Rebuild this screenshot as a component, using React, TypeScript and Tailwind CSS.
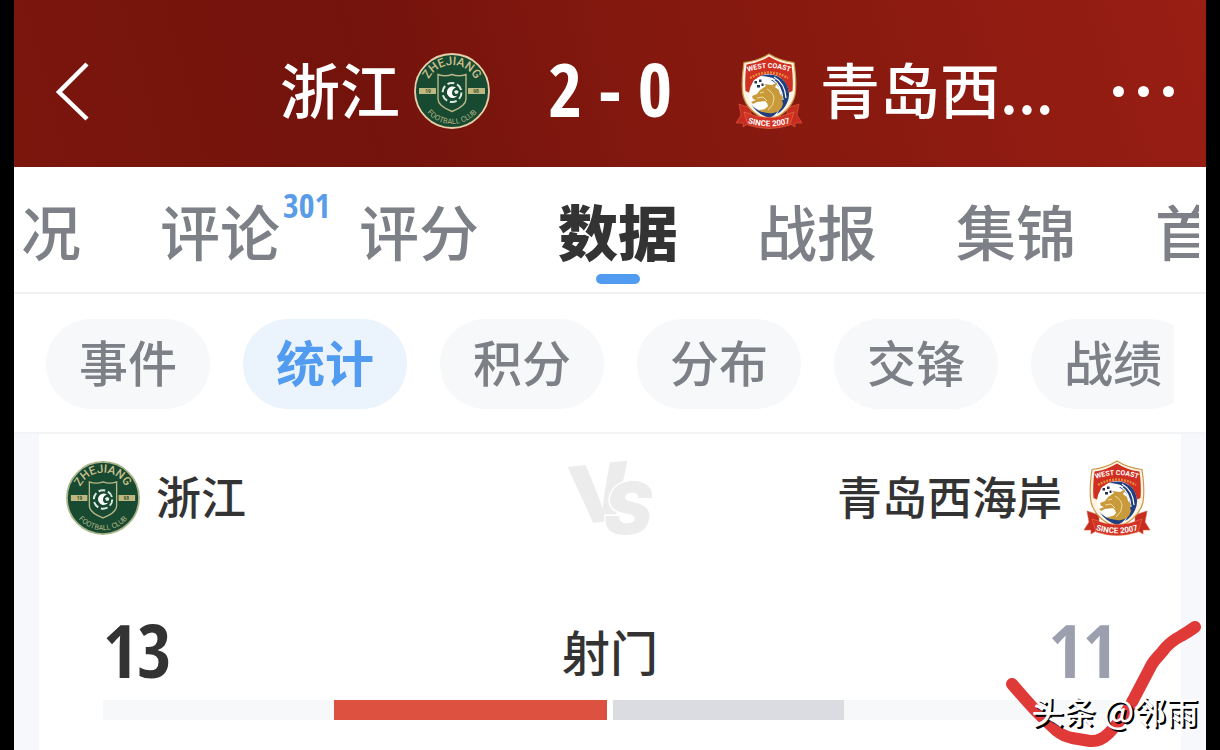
import React, { useState } from "react";

const tabs = ["况", "评论", "评分", "数据", "战报", "集锦", "首"];
const filters = ["事件", "统计", "积分", "分布", "交锋", "战绩"];
const stats = [{ label: "射门", home: 13, away: 11 }];

const ZhejiangLogo: React.FC<{ className: string; id: string; ring: string }> = ({ className, id, ring }) => (
  <svg viewBox="0 0 76 76" className={className} role="img" aria-label="浙江">
    <defs>
      <path id={`${id}-top`} d="M12 38 A26 26 0 0 1 64 38" />
      <path id={`${id}-bottom`} d="M5 38 A33 33 0 0 0 71 38" />
    </defs>
    <circle cx="38" cy="38" r="37" fill="#174a30" stroke={ring} strokeWidth="1.8" />
    <text fill="#c9bf8c" fontSize="12" fontWeight="500" fontFamily="Roboto, sans-serif" textAnchor="middle">
      <textPath href={`#${id}-top`} startOffset="50%">ZHEJIANG</textPath>
    </text>
    <text fill="#b4b486" fontSize="7.5" fontFamily="Roboto, sans-serif" textAnchor="middle">
      <textPath href={`#${id}-bottom`} startOffset="50%">FOOTBALL CLUB</textPath>
    </text>
    <path d="M5 35h17v6H5z M54 35h17v6H54z" fill="#bdb880" />
    <text x="14" y="40" fill="#3d512c" fontSize="5" fontWeight="700" fontFamily="Roboto, sans-serif" textAnchor="middle">19</text>
    <text x="62" y="40" fill="#3d512c" fontSize="5" fontWeight="700" fontFamily="Roboto, sans-serif" textAnchor="middle">98</text>
    <path d="M24 21.5q7 2.5 14 0 7 2.5 14 0V46q0 7-14 12.500Q24 53 24 46z" fill="#174a30" stroke="#b9b788" strokeWidth="1.400" />
    <circle cx="38" cy="39.500" r="9.500" fill="none" stroke="#dcebe2" strokeWidth="2" strokeDasharray="7 2.950" />
    <path d="M42 34.500a5.800 5.800 0 1 0 1.500 8c-3 1.500-5.500.5-5.500-2.800 0-2.600 1.800-4.400 4-5.200z" fill="#fff" />
    <path d="M40 38.500l2-1.500 2.500 1-.5 2.500-2.500.5z" fill="#e4f0e9" />
  </svg>
);

const QingdaoLogo: React.FC<{ className: string; id: string }> = ({ className, id }) => (
  <svg viewBox="0 0 76 76" className={className} role="img" aria-label="青岛西海岸">
    <defs>
      <path id={`${id}-top`} d="M15 20 Q39 10 63 20" />
      <path id={`${id}-bottom`} d="M16 69.500 Q39 77 62 69.500" />
    </defs>
    <path d="M9 51l12 4v14l-8 5v-4H6l5-8zM69 51l-12 4v14l8 5v-4h7l-5-8z" fill="#c72c20" stroke="#e0603c" strokeWidth="0.600" />
    <path d="M39 1Q28 8 14 9.500Q11 30 13 42Q17 59 39 68Q61 59 65 42Q67 30 64 9.500Q50 8 39 1z" fill="#fff3df" stroke="#c9994a" strokeWidth="1.200" />
    <path d="M39 3.500Q29 10 16.500 11.500Q14.500 26 15.500 38L20 40Q20 24 39 22Q58 24 58 40L62.500 38Q63.500 26 61.500 11.500Q49 10 39 3.500z" fill="#cf3022" />
    <text fill="#fff" fontSize="7" fontWeight="700" fontFamily="Roboto, sans-serif" textAnchor="middle">
      <textPath href={`#${id}-top`} startOffset="50%">WEST COAST</textPath>
    </text>
    <path d="M20 25Q39 14 58 25" fill="none" stroke="#e9873c" strokeWidth="2.500" strokeDasharray="2 1" />
    <ellipse cx="39" cy="42" rx="20" ry="21" fill="#fff" />
    {/* wave */}
    <path d="M30 23q16-5 25 6 7 11 2 21-3 7-10 11 5-8 5-15 0-13-11-19l5 0q-6-4-16-4z" fill="#1f3f80" />
    <path d="M44 24q11 6 12 21M41 25q11 7 12 22" fill="none" stroke="#fff" strokeWidth="1.200" />
    <path d="M21 51q5 7 14 8 9 0 13-1-3 5-9 7-12-4-18-14z" fill="#1f3f80" />
    {/* dragon */}
    <path d="M22 43l5-2 3-4 6-4-2-2 8 1 6-3-3 5 4 3 1 4 3 3-1 3 1 4q-2 8-10 9-8 1-15-3 8 0 10-4 0-3-3-5l-8 1-4 2-2-2 5-2-3-1z" fill="#c99a3c" />
    <path d="M30 40l4-1M37 36q7 4 7 10t-6 11M27 45l6-1 4 4" fill="none" stroke="#f3dc9a" strokeWidth="1" />
    <circle cx="28" cy="31" r="5.500" fill="#fff" />
    <path d="M24.500 28h2.500v2.500h-2.500zM29 26.500h2.500V29H29zM27 32h3v2.500h-3zM31.500 30.500h2V33h-2z" fill="#25304f" />
    <path d="M14 59Q39 70 64 59L60 72Q39 79 18 72z" fill="#d23325" stroke="#e8764c" strokeWidth="0.600" />
    <text fill="#fff" fontSize="8" fontWeight="700" fontFamily="Roboto, sans-serif" textAnchor="middle">
      <textPath href={`#${id}-bottom`} startOffset="50%">SINCE 2007</textPath>
    </text>
  </svg>
);

const Header: React.FC = () => (
  <header className="grid grid-cols-[1fr_240px_1fr] items-center h-[167px] pt-[15px] text-white bg-[linear-gradient(75deg,#7b160d_0%,#73130c_30%,#83180f_52%,#8a1a10_72%,#991e14_100%)]">
    <div className="flex items-center justify-between pl-[40px]">
      <button aria-label="返回">
        <svg viewBox="0 0 36 60" className="w-[36px] h-[60px]" fill="none" stroke="currentColor" strokeWidth="4.500">
          <path d="M33 3L5 31l28 27" />
        </svg>
      </button>
      <div className="flex items-center gap-[14px]">
        <span className="text-[60px] leading-[60px] pb-[6px] font-medium">浙江</span>
        <ZhejiangLogo className="size-[76px]" id="zj-head" ring="#e6cfa8" />
      </div>
    </div>
    <div className="flex justify-center gap-[16px] pb-[4px] text-[74px] leading-[76px] font-bold font-['Noto_Sans_ExtraCondensed','Open_Sans_Condensed','Roboto_Condensed',Roboto,sans-serif]">
      <span>2</span>
      <span>-</span>
      <span>0</span>
    </div>
    <div className="flex items-center justify-between pr-[32px]">
      <div className="flex items-center gap-[14px]">
        <QingdaoLogo className="size-[76px]" id="qd-head" />
        <span className="text-[60px] leading-[60px] pb-[6px] font-medium whitespace-nowrap">青岛西...</span>
      </div>
      <button aria-label="更多" className="flex gap-[14px]">
        <span className="size-[11px] rounded-full bg-white" />
        <span className="size-[11px] rounded-full bg-white" />
        <span className="size-[11px] rounded-full bg-white" />
      </button>
    </div>
  </header>
);

const StatRow: React.FC<{ label: string; home: number; away: number }> = ({ label, home, away }) => {
  const total = home + away;

  return (
    <div className="px-[64px]">
      <div className="grid grid-cols-3 items-center h-[80px]">
        <span className="text-[74px] leading-[76px] font-bold text-[#333333] font-['Noto_Sans_ExtraCondensed','Open_Sans_Condensed','Roboto_Condensed',Roboto,sans-serif]">{home}</span>
        <span className="text-center text-[48px] leading-[76px] font-medium">{label}</span>
        <span className="text-right text-[74px] leading-[76px] font-bold text-[#9c9fae] font-['Noto_Sans_ExtraCondensed','Open_Sans_Condensed','Roboto_Condensed',Roboto,sans-serif]">{away}</span>
      </div>
      <div className="grid grid-cols-2 gap-[6px] mt-[10px]">
        <div className="flex justify-end h-[20px] bg-[#f7f8fa]">
          <div className="bg-[#dd5140]" style={{ width: `${(home / total) * 100}%` }} />
        </div>
        <div className="h-[20px] bg-[#f7f8fa]">
          <div className="h-full bg-[#dbdce2]" style={{ width: `${(away / total) * 100}%` }} />
        </div>
      </div>
    </div>
  );
};

const App: React.FC = () => {
  const [tab, setTab] = useState("数据");
  const [filter, setFilter] = useState("统计");

  return (
    <div className="relative min-h-screen overflow-hidden bg-black px-[14px] text-[#333333] font-['Noto_Sans_CJK_SC',sans-serif]">
      <Header />

      {/* Match tabs */}
      <nav className="bg-white border-b-2 border-[#f0f1f3] px-[7px]">
        <div className="flex gap-[79px] h-[125px] overflow-hidden">
          {tabs.map((name) => (
            <button
              key={name}
              onClick={() => setTab(name)}
              className={`relative shrink-0 text-[60px] leading-[125px] ${tab === name ? "font-black text-[#333333]" : "font-medium text-[#7e8087]"}`}
            >
              {name}
              {name === "评论" && (
                <span className="absolute left-full top-[20px] ml-[3px] text-[34px] leading-[36px] font-medium text-[#5a9ce8] font-['Noto_Sans_ExtraCondensed','Open_Sans_Condensed','Roboto_Condensed',Roboto,sans-serif]">
                  301
                </span>
              )}
              {tab === name && (
                <span className="absolute bottom-[8px] left-1/2 -translate-x-1/2 w-[44px] h-[10px] rounded-full bg-[#519bf0]" />
              )}
            </button>
          ))}
        </div>
      </nav>

      {/* Data filters */}
      <div className="bg-white border-b-2 border-[#f3f4f6] px-[32px] pt-[25px] pb-[23px]">
        <div className="flex gap-[33px] overflow-hidden">
          {filters.map((name) => (
            <button
              key={name}
              onClick={() => setFilter(name)}
              className={`shrink-0 h-[90px] px-[33px] pb-[6px] rounded-full text-[49px] leading-[84px] ${filter === name ? "font-bold text-[#519bf0] bg-[#ebf3fd]" : "font-medium text-[#7e8087] bg-[#f7f8fa]"}`}
            >
              {name}
            </button>
          ))}
        </div>
      </div>

      <main className="bg-[#f6f8fb] px-[25px]">
        <section className="bg-white pt-[24px] pb-[30px]">
          <div className="grid grid-cols-[1fr_auto_1fr] items-center px-[27px]">
            <div className="flex items-center gap-[16px]">
              <ZhejiangLogo className="size-[74px]" id="zj-card" ring="#a9b48a" />
              <span className="text-[45px] leading-[70px] pb-[4px] font-medium">浙江</span>
            </div>
            <svg viewBox="0 0 88 80" className="w-[88px] h-[80px] overflow-visible" fontFamily="Inter, sans-serif" fontWeight="900" fill="#ececec">
              <text x="6" y="67" fontSize="80" stroke="#fff" strokeWidth="3" paintOrder="stroke">
                <tspan rotate="-6">V</tspan>
                <tspan x="38" y="76" fontSize="72" fontStyle="italic">S</tspan>
              </text>
            </svg>
            <div className="flex items-center justify-end gap-[16px]">
              <span className="text-[45px] leading-[70px] pb-[4px] font-medium">青岛西海岸</span>
              <QingdaoLogo className="size-[76px]" id="qd-card" />
            </div>
          </div>
          <div className="mt-[72px]">
            {stats.map((s) => (
              <StatRow key={s.label} {...s} />
            ))}
          </div>
        </section>
      </main>

      {/* Hand-drawn tick and author mark */}
      <svg viewBox="0 0 200 130" className="absolute right-[14px] bottom-0 w-[200px] h-[130px] pointer-events-none" fill="none">
        <path d="M6 64Q18 78 29 90Q40 101 51 111Q57 116 66 118L84 121Q94 122 103 113Q117 98 124 86L145 46C148 40 153 36 156 32C161 25 167 20 175 16Q182 12 189 7" stroke="#e03a38" strokeWidth="12" strokeLinecap="round" strokeLinejoin="round" />
      </svg>
      <span className="absolute right-[22px] bottom-[20px] text-[32px] leading-[40px] font-medium text-white [text-shadow:2px_2px_0_#000]">
        头条 @邻雨
      </span>
    </div>
  );
};

export default App;
